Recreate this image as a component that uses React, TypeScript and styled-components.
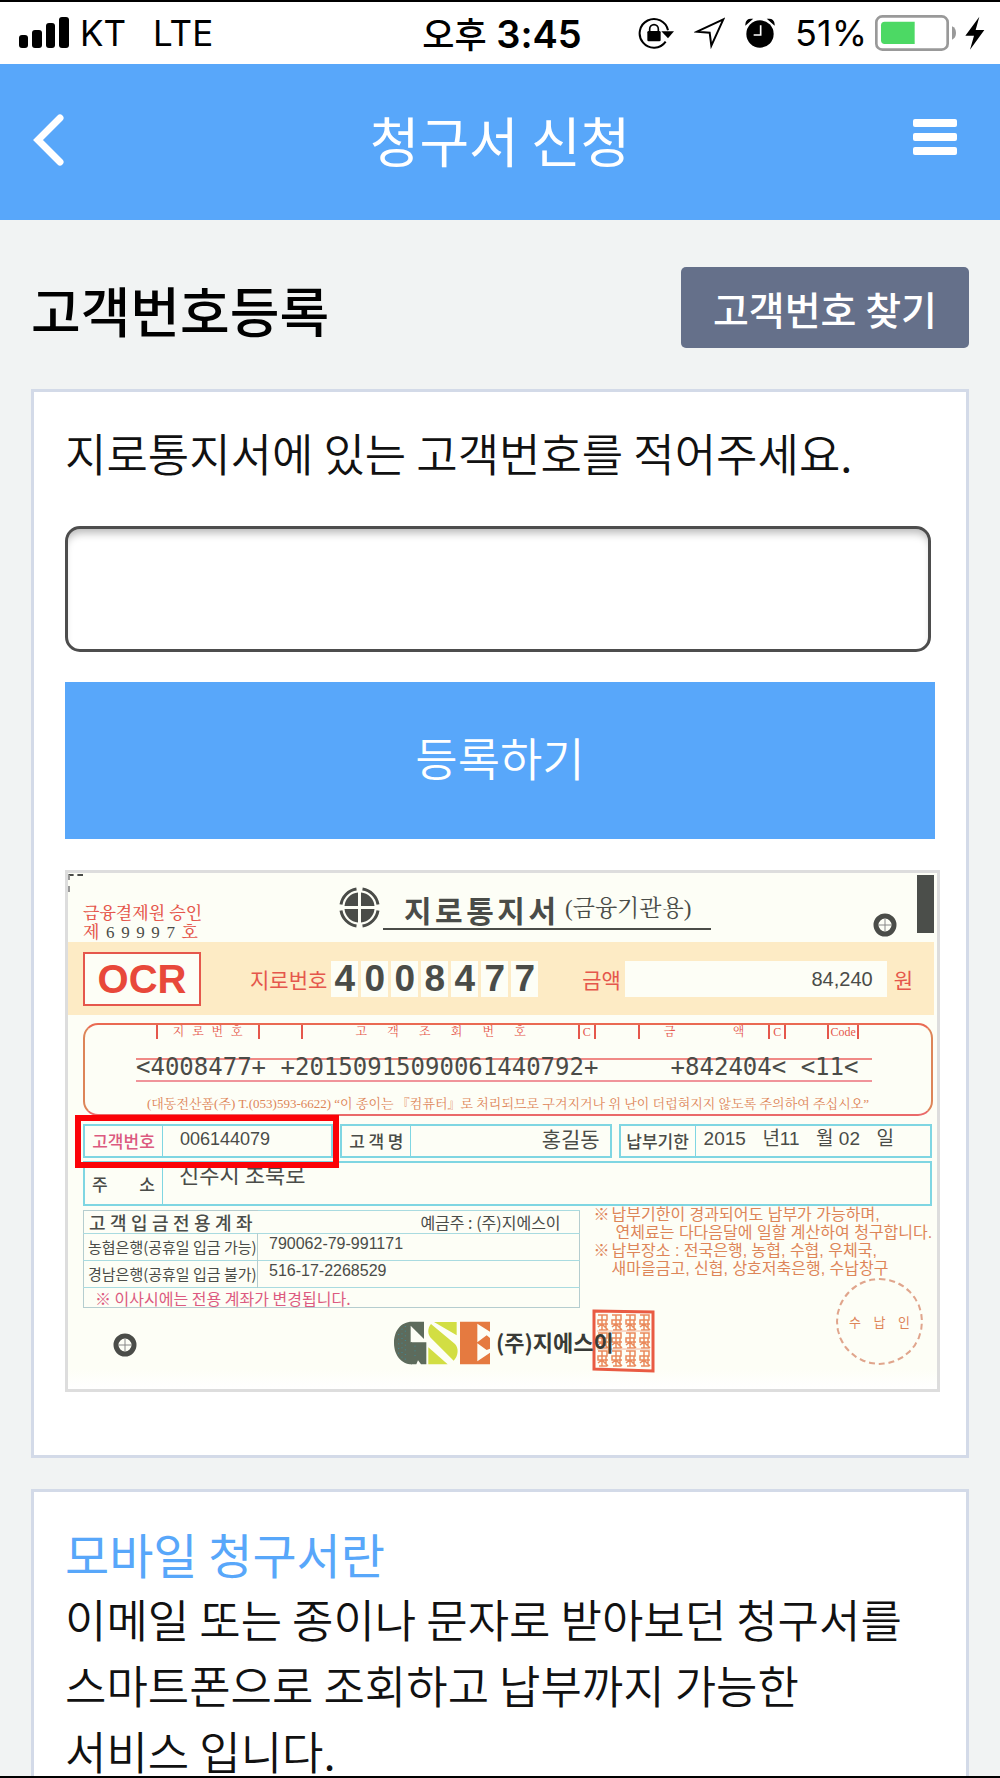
import React from "react";
import styled, { createGlobalStyle } from "styled-components";

const korean = '"Noto Sans CJK KR", "Noto Sans", sans-serif';
const latin = '"Liberation Sans", "Noto Sans CJK KR", sans-serif';
const serif = '"Liberation Serif", "Noto Serif CJK KR", "Noto Sans CJK KR", serif';

const color = {
  blue: "#58a7fa",
  page: "#f1f3f3",
  line: "#d3dae8",
  slate: "#65708a",
  ink: "#4a4c48",
  red: "#e5574c",
  orange: "#dd8558",
  pink: "#dc5a80",
  cyan: "#7fd6e2",
  cream: "#fdfef6",
  band: "#fdebc5",
};

const GlobalStyle = createGlobalStyle`
  *, *::before, *::after { box-sizing: border-box; }
  body { margin: 0; background: ${color.page}; font-family: ${korean}; color: #111; }
  h1, h2, p { margin: 0; }
  button, input { font: inherit; }
`;

/* ---------- screen ---------- */

const Screen = styled.div`
  display: flex;
  flex-direction: column;
  height: 100vh;
  overflow: hidden;
  border-top: 2px solid #000;
  border-bottom: 2px solid #000;
`;

const StatusBar = styled.div`
  flex: none;
  display: grid;
  grid-template-columns: 1fr auto 1fr;
  align-items: center;
  height: 62px;
  padding: 0 15px 0 19px;
  background: #fff;
  color: #000;
  font: 400 36px/40px Inter, ${korean};
`;

const StatusLeft = styled.div`
  display: flex;
  align-items: center;
  gap: 11px;
  font-size: 35px;
`;

const Network = styled.span`
  padding-left: 16px;
`;

const Clock = styled.time`
  font-size: 38px;
  font-weight: 600;
`;

const ClockPeriod = styled.span`
  font: 500 35px/40px ${korean};
`;

const StatusRight = styled.div`
  display: flex;
  align-items: center;
  justify-content: flex-end;
  gap: 20px;
`;

const Power = styled.div`
  display: flex;
  align-items: center;
  gap: 8px;
`;

const Header = styled.header`
  flex: none;
  display: grid;
  grid-template-columns: 1fr auto 1fr;
  align-items: center;
  height: 156px;
  padding: 0 33px 4px;
  background: ${color.blue};
  color: #fff;
`;

const HeaderTitle = styled.h1`
  font-size: 54px;
  line-height: 66px;
  font-weight: 400;
`;

const IconButton = styled.button<{ $end?: boolean }>`
  justify-self: ${(p) => (p.$end ? "end" : "start")};
  display: flex;
  margin: 0;
  padding: 0 ${(p) => (p.$end ? 10 : 0)}px 0 0;
  border: 0;
  background: none;
  color: inherit;
`;

const Main = styled.main`
  flex: 1;
  min-height: 0;
  overflow-y: auto;
  scrollbar-width: none;
  padding: 47px 31px;
`;

const TitleRow = styled.div`
  display: flex;
  align-items: center;
  justify-content: space-between;
  margin-bottom: 41px;
`;

const SectionTitle = styled.h2`
  padding-top: 4px;
  font-size: 54px;
  line-height: 66px;
  font-weight: 500;
  color: #000;
`;

const FindButton = styled.button`
  height: 81px;
  padding: 0 32px;
  border: 0;
  border-radius: 5px;
  background: ${color.slate};
  color: #fff;
  font-size: 39px;
  font-weight: 500;
  line-height: 48px;
`;

const Card = styled.section<{ $roomy?: boolean }>`
  margin-bottom: 31px;
  padding: 28px 31px ${(p) => (p.$roomy ? 63 : 31)}px;
  border: 3px solid ${color.line};
  background: #fff;
`;

const FieldLabel = styled.label`
  display: block;
  margin-bottom: 40px;
  font-size: 45px;
  line-height: 66px;
  font-weight: 350;
`;

const NumberInput = styled.input`
  display: block;
  width: calc(100% - 4px);
  height: 126px;
  margin-bottom: 30px;
  padding: 0 24px;
  border: 3px solid #4d4d4d;
  border-radius: 15px;
  background: #fff;
  box-shadow: inset 0 8px 8px -4px rgba(0, 0, 0, 0.28);
  font-size: 45px;
`;

const SubmitButton = styled.button`
  display: block;
  width: 100%;
  height: 157px;
  margin-bottom: 31px;
  padding: 0 0 10px;
  border: 0;
  background: ${color.blue};
  color: #fff;
  font-size: 46px;
  font-weight: 350;
`;

const InfoTitle = styled.h2`
  font-size: 48px;
  line-height: 66px;
  font-weight: 400;
  color: ${color.blue};
`;

const InfoText = styled.p`
  font-size: 45px;
  line-height: 66px;
  font-weight: 350;
  word-break: keep-all;
`;

/* ---------- giro bill ---------- */

const Bill = styled.figure`
  position: relative;
  margin: 0 -5px 0 0;
  border: 3px solid #ddd;
  background: linear-gradient(${color.cream} 96%, #fff);
  color: ${color.ink};
  font-size: 16px;
  line-height: 20px;
  white-space: nowrap;
`;

const CornerMark = styled.span`
  position: absolute;
  top: 1px;
  left: 0;
  width: 15px;
  height: 18px;
  border-top: 2px dashed ${color.ink};
  border-left: 2px dashed #999;
`;

const SpreadRow = styled.span<{ $width?: number }>`
  display: flex;
  justify-content: space-between;
  width: ${(p) => (p.$width ? `${p.$width}px` : "100%")};
`;

const BillHead = styled.div`
  display: flex;
  align-items: flex-end;
  height: 69px;
  padding-left: 15px;
`;

const Approval = styled.div`
  width: 115px;
  color: ${color.red};
  font: 500 17px/19px ${serif};
`;

const ApprovalDigit = styled.span`
  color: ${color.ink};
`;

const BillMark = styled.div`
  margin: 0 3px 11px 141px;
`;

const BillTitle = styled.div`
  display: flex;
  align-items: center;
  gap: 9px;
  margin-bottom: 12px;
  padding: 0 20px 0 21px;
  border-bottom: 2px solid ${color.ink};
  font-size: 30px;
  line-height: 38px;
  font-weight: 700;
`;

const BillSubtitle = styled.span`
  font: 400 23px/38px ${serif};
`;

const HeadRight = styled.div`
  display: flex;
  align-items: flex-end;
  gap: 20px;
  margin: 0 3px 0 auto;
`;

const HeadTarget = styled.div`
  display: flex;
  margin-bottom: 5px;
`;

const BlackBar = styled.div`
  width: 17px;
  height: 58px;
  margin-bottom: 9px;
  background: #4b4e4a;
`;

const Band = styled.div`
  display: flex;
  align-items: center;
  height: 73px;
  margin-right: 3px;
  padding: 0 21px 0 15px;
  background: ${color.band};
`;

const OcrBox = styled.div`
  width: 118px;
  border: 2px solid ${color.red};
  background: ${color.cream};
  color: #e8483a;
  font: 700 40px/50px ${latin};
  text-align: center;
`;

const BandLabel = styled.span<{ $left?: number }>`
  margin-left: ${(p) => p.$left ?? 0}px;
  color: ${color.red};
  font-size: 21px;
`;

const GiroDigits = styled.div`
  display: flex;
  gap: 3px;
  margin-left: 4px;
`;

const GiroDigit = styled.span`
  width: 27px;
  background: ${color.cream};
  font: 700 37px/36px ${latin};
  text-align: center;
`;

const Amount = styled.div`
  flex: 1;
  margin: 0 7px 0 4px;
  padding-right: 14px;
  background: ${color.cream};
  font: 400 20px/36px ${latin};
  text-align: right;
`;

const CodeBox = styled.div`
  height: 93px;
  margin: 8px 4px 0 15px;
  border: 2px solid ${color.orange};
  border-top-color: #ea6a52;
  border-bottom-color: #ea6a6a;
  border-radius: 15px;
  color: ${color.red};
`;

const CodeLabels = styled.div`
  display: grid;
  grid-template-columns: 71fr 104fr 42fr 279fr 16fr 42fr 133fr 16fr 41fr 32fr 72fr;
  font: 400 12px/14px ${serif};
`;

const CodeLabel = styled.span<{ $col: number; $pad?: number; $open?: boolean }>`
  grid-column: ${(p) => p.$col};
  display: flex;
  justify-content: center;
  min-width: 0;
  padding: 0 ${(p) => p.$pad ?? 0}px;
  border-right: 2px solid ${color.red};
  border-left: ${(p) => (p.$open ? "0" : `2px solid ${color.red}`)};
`;

const CodeLine = styled.div`
  display: flex;
  align-items: flex-start;
  height: 24px;
  margin: 19px 59px 0 51px;
  border-top: 2px solid #f08a86;
  border-bottom: 2px solid #f0949a;
`;

const CodeText = styled.span`
  color: ${color.ink};
  font: 400 24px/14px "DejaVu Sans Mono", monospace;
  white-space: pre;
`;

const Caution = styled.p`
  padding-top: 12px;
  color: ${color.orange};
  font: 400 13px/20px ${serif};
  text-align: center;
`;

const FieldRow = styled.div`
  display: grid;
  grid-template-columns: 250fr 271fr 313fr;
  gap: 7px;
  margin: 8px 5px 0 15px;
`;

const Field = styled.div`
  display: flex;
  height: 34px;
  border: 2px solid ${color.cyan};
  line-height: 30px;
`;

const FieldName = styled.span<{ $width: number; $accent?: boolean }>`
  flex: none;
  display: flex;
  align-items: center;
  justify-content: center;
  width: ${(p) => p.$width}px;
  padding: 0 7px;
  border-right: 1px solid ${color.cyan};
  color: ${(p) => (p.$accent ? color.pink : color.ink)};
  font-size: 17px;
  font-weight: 500;
`;

const CustomerNumber = styled.span`
  padding-left: 17px;
  font: 400 18px/26px ${latin};
`;

const CustomerName = styled.span`
  margin-left: auto;
  padding-right: 10px;
  font-size: 21px;
  line-height: 24px;
`;

const DueDate = styled.span`
  flex: 1;
  display: flex;
  justify-content: space-between;
  padding: 0 36px 0 8px;
  font: 400 19px/26px ${latin};
`;

const AddressBox = styled.div`
  display: flex;
  height: 45px;
  margin: 3px 5px 0 15px;
  border: 2px solid ${color.cyan};
  line-height: 41px;
`;

const AddressText = styled.span`
  padding-left: 16px;
  font-size: 22px;
  line-height: 20px;
`;

const Highlight = styled.div`
  position: absolute;
  top: 242px;
  left: 7px;
  width: 264px;
  height: 53px;
  border: 6px solid #fb0207;
`;

const BillLower = styled.div`
  display: grid;
  grid-template-columns: 496fr 343fr;
  gap: 14px;
  margin: 4px 0 0 15px;
`;

const AccountTable = styled.table`
  width: 100%;
  border-collapse: collapse;
  table-layout: fixed;
  border: 1px solid #b5cdcf;
`;

const AccountCell = styled.td<{ $end?: boolean; $tight?: boolean; $pink?: boolean }>`
  height: ${(p) => (p.$tight ? 20 : 27)}px;
  padding: 0 ${(p) => (p.$end ? 18 : 4)}px 0 ${(p) => (p.$pink ? 11 : 4)}px;
  border-top: 1px solid #a9dbe0;
  border-right: ${(p) => (p.$pink || p.$end ? 0 : 1)}px solid #b5cdcf;
  color: ${(p) => (p.$pink ? color.pink : color.ink)};
  font-size: ${(p) => (p.$pink || p.$end ? 16 : 15)}px;
  line-height: 18px;
  text-align: ${(p) => (p.$end ? "right" : "left")};
`;

const AccountHead = styled.th`
  width: 174px;
  height: 23px;
  padding: 0 5px;
  font-size: 18px;
  font-weight: 500;
  line-height: 18px;
`;

const AccountNumber = styled.td`
  padding: 0 0 6px 11px;
  border-top: 1px solid #a9dbe0;
  font: 400 16px/18px ${latin};
`;

const Notes = styled.ul`
  margin: -4px 0 0;
  padding: 0;
  list-style: none;
  color: ${color.orange};
  font: 400 16px/18px ${latin};
`;

const Note = styled.li`
  display: grid;
  grid-template-columns: 18px 1fr;
`;

const NoteSecond = styled.span`
  padding-left: 4px;
`;

const BillFoot = styled.div`
  display: flex;
  align-items: flex-start;
  height: 81px;
  padding: 0 14px 0 45px;
`;

const FootTarget = styled.div`
  display: flex;
  margin-top: 25px;
`;

const FootLogo = styled.div`
  display: flex;
  margin: 13px 6px 0 257px;
`;

const Company = styled.span`
  z-index: 1;
  margin-top: 13px;
  color: #383a36;
  font-size: 22px;
  line-height: 40px;
  font-weight: 700;
`;

const Stamp = styled.div`
  display: flex;
  margin: 1px 0 0 -22px;
`;

const ReceiptSeal = styled.div`
  display: flex;
  align-items: center;
  width: 87px;
  height: 87px;
  margin: -30px 0 0 auto;
  padding: 0 11px;
  border: 2px dashed #e0a58c;
  border-radius: 50%;
  color: ${color.orange};
  font-size: 13px;
`;

/* ---------- drawings ---------- */

const SignalBars = () => (
  <svg width="50" height="32" viewBox="0 0 50 32" aria-hidden="true">
    <rect x="0" y="18" width="9" height="13" rx="3" />
    <rect x="13" y="13" width="10" height="18" rx="3" />
    <rect x="27" y="6" width="9" height="25" rx="3" />
    <rect x="40" y="0" width="10" height="31" rx="3" />
  </svg>
);

const RotationLock = () => (
  <svg width="36" height="32" viewBox="418 50 108 96" aria-hidden="true">
    <path d="M501 124A43 43 0 1 1 508 90" fill="none" stroke="#000" strokeWidth="6" />
    <path d="M488 93h38l-18 21z" />
    <rect x="446" y="92" width="40" height="31" rx="4" />
    <path d="M453 93v-7a13 13 0 0 1 26 0v7" fill="none" stroke="#000" strokeWidth="5" />
  </svg>
);

const LocationArrow = () => (
  <svg width="31" height="32" viewBox="583 53 93 96" aria-hidden="true">
    <path d="M592 97l79-37-36 79-5-39z" fill="none" stroke="#000" strokeWidth="6" />
  </svg>
);

const AlarmClock = () => (
  <svg width="30" height="32" viewBox="736 50 90 96" aria-hidden="true">
    <circle cx="781" cy="101" r="41" />
    <path d="M739 72c0-10 7-16 17-15zM823 72c0-10-7-16-17-15z" stroke="#000" strokeWidth="4" />
    <path d="M783 75v29h-21" fill="none" stroke="#fff" strokeWidth="5" />
  </svg>
);

const Battery = () => (
  <svg width="82" height="36" viewBox="1125 44 246 108" aria-hidden="true">
    <rect x="1129" y="48" width="214" height="100" rx="18" fill="none" stroke="#999" strokeWidth="8" />
    <path d="M1154 64h90v67h-90q-11 0-11-11V75q0-11 11-11z" fill="#4cd964" />
    <path d="M1356 78q12 5 12 20t-12 20z" fill="#999" />
  </svg>
);

const Bolt = () => (
  <svg width="20" height="34" viewBox="1395 48 60 102" aria-hidden="true">
    <path d="M1438 50l-42 57h26l-12 42 43-59h-26z" />
  </svg>
);

const BackIcon = () => (
  <svg width="32" height="54" viewBox="0 0 32 54" aria-hidden="true">
    <path d="M27 5L5 27l22 22" fill="none" stroke="#fff" strokeWidth="7" strokeLinecap="round" />
  </svg>
);

const MenuIcon = () => (
  <svg width="44" height="48" viewBox="0 0 44 48" aria-hidden="true" fill="#fff">
    <rect x="0" y="3" width="44" height="8" rx="2" />
    <rect x="0" y="17" width="44" height="8" rx="2" />
    <rect x="0" y="31" width="44" height="8" rx="2" />
  </svg>
);

const GiroMark = () => (
  <svg width="41" height="41" viewBox="-20.5 -20.5 41 41" aria-hidden="true">
    {[0, 90, 180, 270].map((turn) => (
      <g key={turn} transform={`rotate(${turn})`}>
        <path d="M1.500 -1.500V-15A15 15 0 0 1 15 -1.500z" fill="#4a4c48" />
        <path d="M3 -18.500A18.500 18.500 0 0 1 18.500 -3" fill="none" stroke="#4a4c48" strokeWidth="3" />
      </g>
    ))}
  </svg>
);

const Target = () => (
  <svg width="24" height="24" viewBox="0 0 24 24" fill="none" aria-hidden="true">
    <circle cx="12" cy="12" r="9" stroke="#4a4c48" strokeWidth="5" />
    <path d="M12 6v12M6 12h12" stroke="#888" strokeWidth="1" />
  </svg>
);

const GseLogo = () => (
  <svg width="96" height="44" viewBox="1032 661 288 132" role="img" aria-label="GSE">
    <path d="M1122 663h-36c-34 0-54 28-54 64s22 64 54 64v-66h-4v-50l40 40z" fill="#5d6b5c" />
    <path d="M1083 725h46v66h-16l-9-12-5 12h-16z" fill="#5d6b5c" />
    <g stroke="#3f8a9a" strokeWidth="3" strokeDasharray="3 11">
      <path d="M1046 700v60M1056 684v92M1066 676v108M1095 735v40" />
    </g>
    <path d="M1152 664h68v40zM1143 670c-12 14-10 34 2 44l66 66c14-14 16-38 4-50z" fill="#d2de43" />
    <path d="M1135 740l58 51h-58z" fill="#d2de43" />
    <path d="M1230 663h90v30l-38-24v56l28-21 10 8v32l-10 4-28-20v54l38-26v35h-90z" fill="#e57a40" />
  </svg>
);

const StampMark = () => (
  <svg width="63" height="64" viewBox="0 0 63 64" fill="none" aria-hidden="true">
    <path d="M2 2l59 1v59l-59-2z" stroke="#e95b43" strokeWidth="3" />
    <g stroke="#ea8a5c" strokeWidth="1.500">
      {[6, 24, 42].map((y) =>
        [6, 20, 34, 48].map((x) => (
          <path
            key={`${x}-${y}`}
            d={`M${x} ${y}h9v5h-9v4h10M${x + 4} ${y}v15M${x} ${y + 12}l4 -3l6 6M${x + 1} ${y + 15}h8M${x + 8} ${y + 5}v8`}
          />
        ))
      )}
    </g>
    <path d="M5 22h53M5 40h53" stroke="#f2b49a" strokeWidth="1" />
  </svg>
);

/* ---------- pieces ---------- */

const Spread = ({ text, width }: { text: string; width?: number }) => (
  <SpreadRow $width={width}>
    {[...text].map((char, i) => (
      <span key={i}>{char}</span>
    ))}
  </SpreadRow>
);

const GiroBill = () => (
  <Bill aria-label="지로통지서">
    <CornerMark />
    <BillHead>
      <Approval>
        <div>금융결제원 승인</div>
        <SpreadRow>
          <span>제</span>
          {[..."69997"].map((digit, i) => (
            <ApprovalDigit key={i}>{digit}</ApprovalDigit>
          ))}
          <span>호</span>
        </SpreadRow>
      </Approval>
      <BillMark>
        <GiroMark />
      </BillMark>
      <BillTitle>
        <Spread text="지로통지서" width={152} />
        <BillSubtitle>(금융기관용)</BillSubtitle>
      </BillTitle>
      <HeadRight>
        <HeadTarget>
          <Target />
        </HeadTarget>
        <BlackBar />
      </HeadRight>
    </BillHead>

    <Band>
      <OcrBox>OCR</OcrBox>
      <BandLabel $left={49}>지로번호</BandLabel>
      <GiroDigits>
        {[..."4008477"].map((digit, i) => (
          <GiroDigit key={i}>{digit}</GiroDigit>
        ))}
      </GiroDigits>
      <BandLabel $left={44}>금액</BandLabel>
      <Amount>84,240</Amount>
      <BandLabel>원</BandLabel>
    </Band>

    <CodeBox>
      <CodeLabels>
        <CodeLabel $col={2} $pad={15}><Spread text="지로번호" /></CodeLabel>
        <CodeLabel $col={4} $pad={52}><Spread text="고객조회번호" /></CodeLabel>
        <CodeLabel $col={5} $open>C</CodeLabel>
        <CodeLabel $col={7} $pad={24}><Spread text="금액" /></CodeLabel>
        <CodeLabel $col={8} $open>C</CodeLabel>
        <CodeLabel $col={10}>Code</CodeLabel>
      </CodeLabels>
      <CodeLine>
        <CodeText>{"<4008477+ +20150915090061440792+     +842404< <11<"}</CodeText>
      </CodeLine>
      <Caution>
        (대동전산폼(주) T.(053)593-6622) “이 종이는 『컴퓨터』로 처리되므로 구겨지거나 위 난이 더럽혀지지 않도록 주의하여 주십시오”
      </Caution>
    </CodeBox>

    <FieldRow>
      <Field>
        <FieldName $width={78} $accent>고객번호</FieldName>
        <CustomerNumber>006144079</CustomerNumber>
      </Field>
      <Field>
        <FieldName $width={69}><Spread text="고객명" /></FieldName>
        <CustomerName>홍길동</CustomerName>
      </Field>
      <Field>
        <FieldName $width={75}>납부기한</FieldName>
        <DueDate>
          <span>2015</span>
          <span>년11</span>
          <span>월 02</span>
          <span>일</span>
        </DueDate>
      </Field>
    </FieldRow>
    <AddressBox>
      <FieldName $width={78}><Spread text="주소" /></FieldName>
      <AddressText>진주시 초북로</AddressText>
    </AddressBox>
    <Highlight />

    <BillLower>
      <AccountTable>
        <tbody>
          <tr>
            <AccountHead scope="col"><Spread text="고객입금전용계좌" /></AccountHead>
            <AccountCell $end $tight>예금주 : (주)지에스이</AccountCell>
          </tr>
          <tr>
            <AccountCell>농협은행(공휴일 입금 가능)</AccountCell>
            <AccountNumber>790062-79-991171</AccountNumber>
          </tr>
          <tr>
            <AccountCell>경남은행(공휴일 입금 불가)</AccountCell>
            <AccountNumber>516-17-2268529</AccountNumber>
          </tr>
          <tr>
            <AccountCell colSpan={2} $tight $pink>※ 이사시에는 전용 계좌가 변경됩니다.</AccountCell>
          </tr>
        </tbody>
      </AccountTable>
      <Notes>
        <Note>
          <span>※</span>
          <span>
            납부기한이 경과되어도 납부가 가능하며,
            <br />
            <NoteSecond>연체료는 다다음달에 일할 계산하여 청구합니다.</NoteSecond>
          </span>
        </Note>
        <Note>
          <span>※</span>
          <span>
            납부장소 : 전국은행, 농협, 수협, 우체국,
            <br />
            새마을금고, 신협, 상호저축은행, 수납창구
          </span>
        </Note>
      </Notes>
    </BillLower>

    <BillFoot>
      <FootTarget>
        <Target />
      </FootTarget>
      <FootLogo>
        <GseLogo />
      </FootLogo>
      <Company>(주)지에스이</Company>
      <Stamp>
        <StampMark />
      </Stamp>
      <ReceiptSeal>
        <Spread text="수납인" />
      </ReceiptSeal>
    </BillFoot>
  </Bill>
);

export default function App() {
  return (
    <Screen>
      <GlobalStyle />
      <StatusBar>
        <StatusLeft>
          <SignalBars />
          <span>KT</span>
          <Network>LTE</Network>
        </StatusLeft>
        <Clock>
          <ClockPeriod>오후</ClockPeriod> 3:45
        </Clock>
        <StatusRight>
          <RotationLock />
          <LocationArrow />
          <AlarmClock />
          <Power>
            <span>51%</span>
            <Battery />
            <Bolt />
          </Power>
        </StatusRight>
      </StatusBar>

      <Header>
        <IconButton type="button" aria-label="뒤로">
          <BackIcon />
        </IconButton>
        <HeaderTitle>청구서 신청</HeaderTitle>
        <IconButton type="button" aria-label="메뉴" $end>
          <MenuIcon />
        </IconButton>
      </Header>

      <Main>
        <TitleRow>
          <SectionTitle>고객번호등록</SectionTitle>
          <FindButton type="button">고객번호 찾기</FindButton>
        </TitleRow>

        <Card $roomy>
          <FieldLabel htmlFor="customer-number">지로통지서에 있는 고객번호를 적어주세요.</FieldLabel>
          <NumberInput id="customer-number" type="text" inputMode="numeric" />
          <SubmitButton type="button">등록하기</SubmitButton>
          <GiroBill />
        </Card>

        <Card>
          <InfoTitle>모바일 청구서란</InfoTitle>
          <InfoText>
            이메일 또는 종이나 문자로 받아보던 청구서를
            <br />
            스마트폰으로 조회하고 납부까지 가능한
            <br />
            서비스 입니다.
          </InfoText>
        </Card>
      </Main>
    </Screen>
  );
}
